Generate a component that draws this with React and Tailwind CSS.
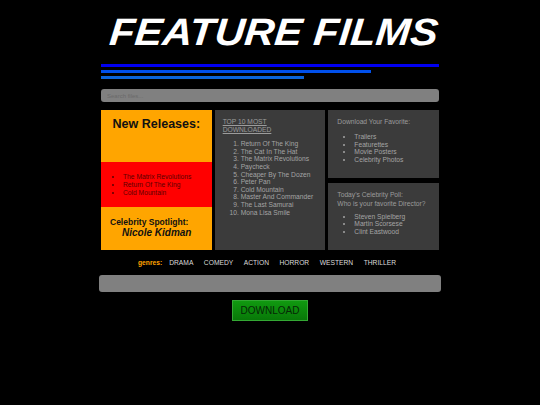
import React from 'react';

const topTen = [
  'Return Of The King',
  'The Cat In The Hat',
  'The Matrix Revolutions',
  'Paycheck',
  'Cheaper By The Dozen',
  'Peter Pan',
  'Cold Mountain',
  'Master And Commander',
  'The Last Samurai',
  'Mona Lisa Smile',
];

const newReleases = ['The Matrix Revolutions', 'Return Of The King', 'Cold Mountain'];
const downloads = ['Trailers', 'Featurettes', 'Movie Posters', 'Celebrity Photos'];
const directors = ['Steven Spielberg', 'Martin Scorsese', 'Clint Eastwood'];
const genres = ['DRAMA', 'COMEDY', 'ACTION', 'HORROR', 'WESTERN', 'THRILLER'];

function App() {
  return (
    <div className="min-h-screen bg-black font-['Liberation_Sans',Arial,sans-serif]">
      <div className="w-[338px] mx-auto pt-[13px]">
        <h1 className="text-white font-bold italic text-[38px] leading-[38px] pl-[7px] whitespace-nowrap">
          <span className="inline-block origin-bottom-left scale-x-[1.09] -skew-x-[5deg]">FEATURE FILMS</span>
        </h1>

        {/* blue stripes */}
        <div className="mt-[13px] flex flex-col gap-[3px]">
          <div className="h-[3px] w-full bg-[#0000f0]" />
          <div className="h-[3px] w-[80%] bg-[#0050ec]" />
          <div className="h-[3px] w-[60%] bg-[#0a64dc]" />
        </div>

        <input
          type="text"
          placeholder="Search files..."
          className="mt-[10px] block w-full h-[13px] rounded-[3px] bg-[#808080] px-[6px] text-[6px] text-[#555] placeholder-[#6a6a6a] outline-none"
        />

        {/* three columns */}
        <div className="mt-[8px] grid grid-cols-3 gap-[3px] h-[140px]">
          <div className="flex flex-col">
            <div className="h-[52px] bg-[#ffa500] pt-[7px] text-center font-bold text-[12.5px] leading-[15px] text-[#111]">
              New Releases:
            </div>
            <div className="h-[45px] bg-[#ff0000] pt-[11px] pl-[22px]">
              <ul className="list-disc text-[6.7px] leading-[8px] text-[#5a0000]">
                {newReleases.map((t) => (
                  <li key={t}>{t}</li>
                ))}
              </ul>
            </div>
            <div className="flex-1 bg-[#ffa500] pt-[10px] text-[#111]">
              <p className="pl-[9px] font-bold text-[8.5px] leading-[10px]">Celebrity Spotlight:</p>
              <p className="pl-[21px] font-bold italic text-[10px] leading-[11px]">Nicole Kidman</p>
            </div>
          </div>

          <div className="bg-[#3b3b3b] pt-[8px] pl-[8px] text-[6.7px] text-[#9c9c9c]">
            <p className="underline leading-[8px]">
              TOP 10 MOST
              <br />
              DOWNLOADED
            </p>
            <ol className="mt-[6px] list-decimal pl-[18px] leading-[7.63px] text-[#a4a4a4]">
              {topTen.map((t) => (
                <li key={t}>{t}</li>
              ))}
            </ol>
          </div>

          <div className="flex flex-col gap-[5px]">
            <div className="flex-1 bg-[#3b3b3b] pt-[8px] pl-[9px] text-[6.7px] text-[#9c9c9c]">
              <p className="leading-[8px]">Download Your Favorite:</p>
              <ul className="mt-[7px] list-disc pl-[17px] leading-[7.5px] text-[#a4a4a4]">
                {downloads.map((t) => (
                  <li key={t}>{t}</li>
                ))}
              </ul>
            </div>
            <div className="flex-1 bg-[#3b3b3b] pt-[7.5px] pl-[9px] text-[6.7px] text-[#9c9c9c]">
              <p className="leading-[9px]">
                Today's Celebrity Poll:
                <br />
                Who is your favorite Director?
              </p>
              <ul className="mt-[4.5px] list-disc pl-[17px] leading-[7.5px] text-[#a4a4a4]">
                {directors.map((t) => (
                  <li key={t}>{t}</li>
                ))}
              </ul>
            </div>
          </div>
        </div>
      </div>

      {/* genres */}
      <div className="mt-[9px] flex justify-center pr-[6px] text-[6.7px] leading-[8px]">
        <span className="font-bold text-[#ffa500] mr-[7px]">genres:</span>
        <div className="flex gap-[10.5px] text-[#dcdcdc]">
          {genres.map((g) => (
            <span key={g}>{g}</span>
          ))}
        </div>
      </div>

      <div className="mt-[8px] mx-auto w-[342px] h-[17px] rounded-[3px] bg-[#808080]" />

      <div className="mt-[8px] flex justify-center">
        <button className="w-[76px] h-[21px] bg-gradient-to-b from-[#109a10] to-[#087808] border border-[#34a834] text-[#062806] text-[10px] leading-[10px]">
          DOWNLOAD
        </button>
      </div>
    </div>
  );
}

export default App;
